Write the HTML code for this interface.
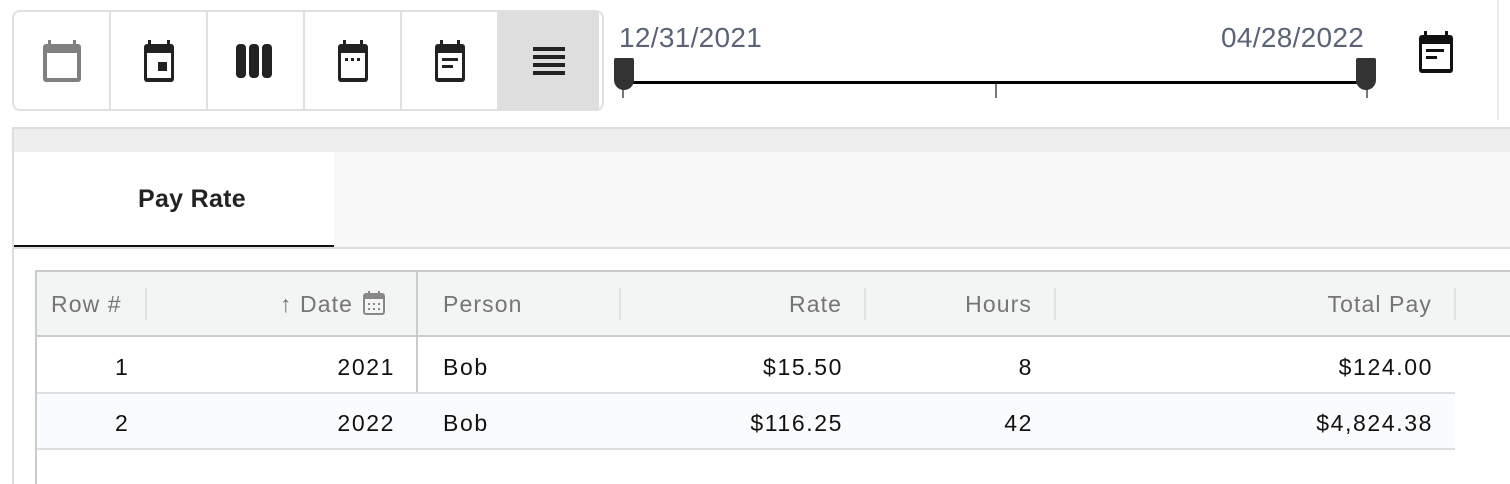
<!DOCTYPE html>
<html><head><style>
body{margin:0;width:1510px;height:484px;background:#fff;font-family:"Liberation Sans",sans-serif;position:relative;overflow:hidden}
.a{position:absolute}
.tb{left:12px;top:10px;width:588px;height:97px;border:2px solid #e0e0e0;border-radius:8px;overflow:hidden;display:flex}
.tb div{width:97px;height:97px;border-right:2px solid #e0e0e0;display:flex;align-items:center;justify-content:center;box-sizing:border-box}
.tb div:last-child{border-right:0;background:#dedede;width:100px}
.h{top:270px;height:67px;background:#f3f4f4;border-top:2px solid #c9cccf;border-bottom:2px solid #c9cccf;box-sizing:border-box}
.t{font-size:23px;position:absolute;white-space:nowrap;letter-spacing:1.4px}
.hd{color:#757575;top:291px;letter-spacing:1.1px}
.c{color:#111;letter-spacing:1.6px}
.sep{position:absolute;top:288px;width:2px;height:32px;background:#e0e2e4}
</style></head><body>
<div class="a tb">
<div><svg width="40" height="44" viewBox="0 0 40 44"><rect x="1" y="5" width="38" height="38" rx="3" fill="#808080"/><rect x="5" y="14" width="30" height="25" fill="#fff"/><rect x="6" y="1" width="3" height="6" fill="#808080"/><rect x="31" y="1" width="3" height="6" fill="#808080"/></svg></div>
<div><svg width="40" height="44" viewBox="0 0 40 44"><rect x="5" y="5" width="30" height="38" rx="3" fill="#222"/><rect x="8" y="14" width="24" height="25" fill="#fff"/><rect x="19" y="23" width="9" height="9" fill="#222"/><rect x="9" y="1" width="3" height="6" fill="#222"/><rect x="28" y="1" width="3" height="6" fill="#222"/></svg></div>
<div><svg width="40" height="34" viewBox="0 0 40 34"><rect x="0" y="0" width="10" height="34" rx="4" fill="#222"/><rect x="13" y="0" width="10" height="34" rx="4" fill="#222"/><rect x="26" y="0" width="10" height="34" rx="4" fill="#222"/></svg></div>
<div><svg width="40" height="44" viewBox="0 0 40 44"><rect x="5" y="5" width="30" height="38" rx="3" fill="#222"/><rect x="8" y="14" width="24" height="25" fill="#fff"/><rect x="12" y="19" width="3" height="3" fill="#222"/><rect x="18" y="19" width="3" height="3" fill="#222"/><rect x="24" y="19" width="3" height="3" fill="#222"/><rect x="10" y="1" width="3" height="6" fill="#222"/><rect x="27" y="1" width="3" height="6" fill="#222"/></svg></div>
<div><svg width="40" height="44" viewBox="0 0 40 44"><rect x="5" y="5" width="30" height="38" rx="3" fill="#222"/><rect x="8" y="14" width="24" height="25" fill="#fff"/><rect x="12" y="19" width="16" height="3" fill="#222"/><rect x="12" y="26" width="11" height="3" fill="#222"/><rect x="10" y="1" width="3" height="6" fill="#222"/><rect x="27" y="1" width="3" height="6" fill="#222"/></svg></div>
<div><svg width="32" height="28" viewBox="0 0 32 28"><rect y="0" width="32" height="4" fill="#222"/><rect y="8" width="32" height="4" fill="#222"/><rect y="16" width="32" height="4" fill="#222"/><rect y="24" width="32" height="4" fill="#222"/></svg></div>
</div>
<div class="t a" style="left:619px;top:22px;font-size:28px;letter-spacing:0.3px;color:#5a6378">12/31/2021</div>
<div class="t a" style="left:1221px;top:22px;font-size:28px;letter-spacing:0.3px;color:#5a6378">04/28/2022</div>
<div class="a" style="left:622px;top:81px;width:744px;height:3px;background:#000"></div>
<div class="a" style="left:622px;top:84px;width:2px;height:14px;background:#777"></div>
<div class="a" style="left:995px;top:84px;width:2px;height:14px;background:#777"></div>
<div class="a" style="left:1366px;top:84px;width:2px;height:14px;background:#777"></div>
<div class="a" style="left:614px;top:58px;width:20px;height:32px;background:#333;border-radius:2px 2px 10px 10px"></div>
<div class="a" style="left:1356px;top:58px;width:20px;height:32px;background:#333;border-radius:2px 2px 10px 10px"></div>
<svg class="a" style="left:1416px;top:30px" width="40" height="44" viewBox="0 0 40 44"><rect x="3" y="5" width="34" height="38" rx="3" fill="#111"/><rect x="6" y="14" width="28" height="25" fill="#fff"/><rect x="10" y="19" width="18" height="3" fill="#111"/><rect x="10" y="26" width="11" height="3" fill="#111"/><rect x="8" y="1" width="3" height="6" fill="#111"/><rect x="29" y="1" width="3" height="6" fill="#111"/></svg>
<div class="a" style="left:1497px;top:0;width:2px;height:120px;background:#eee"></div>
<div class="a" style="left:12px;top:127px;width:1498px;height:2px;background:#ddd"></div>
<div class="a" style="left:12px;top:129px;width:1498px;height:23px;background:#eee"></div>
<div class="a" style="left:12px;top:152px;width:1498px;height:96px;background:#f8f8f8"></div>
<div class="a" style="left:12px;top:127px;width:2px;height:357px;background:#ddd"></div>
<div class="a" style="left:14px;top:152px;width:320px;height:93px;background:#fff;border-bottom:3px solid #111"></div>
<div class="t a" style="left:138px;top:185px;font-size:25px;letter-spacing:0.3px;font-weight:bold;color:#222">Pay Rate</div>
<div class="a" style="left:14px;top:247px;width:1496px;height:2px;background:#ddd"></div>
<div class="a h" style="left:35px;width:1475px"></div>
<div class="a" style="left:35px;top:270px;width:2px;height:214px;background:#c9cccf"></div>
<div class="a" style="left:416px;top:270px;width:2px;height:179px;background:#c9cccf"></div>
<div class="a" style="left:37px;top:393px;width:1418px;height:56px;background:#fafbfd"></div>
<div class="a" style="left:37px;top:392px;width:1418px;height:2px;background:#dcdee0"></div>
<div class="a" style="left:37px;top:448px;width:1418px;height:2px;background:#dcdee0"></div>
<div class="sep" style="left:145px"></div><div class="sep" style="left:619px"></div><div class="sep" style="left:864px"></div><div class="sep" style="left:1054px"></div><div class="sep" style="left:1454px"></div>
<div class="t hd" style="left:51px">Row #</div>
<div class="t hd" style="right:1157px">↑ Date</div>
<svg class="a" style="left:362px;top:290px" width="24" height="26" viewBox="0 0 24 26"><rect x="2" y="4" width="20" height="20" rx="2" fill="none" stroke="#888" stroke-width="2"/><rect x="2" y="4" width="20" height="5" fill="#888"/><rect x="6" y="1" width="2" height="4" fill="#888"/><rect x="16" y="1" width="2" height="4" fill="#888"/><g fill="#888"><rect x="6" y="13" width="2" height="2"/><rect x="11" y="13" width="2" height="2"/><rect x="16" y="13" width="2" height="2"/><rect x="6" y="18" width="2" height="2"/><rect x="11" y="18" width="2" height="2"/><rect x="16" y="18" width="2" height="2"/></g></svg>
<div class="t hd" style="left:443px">Person</div>
<div class="t hd" style="right:668px">Rate</div>
<div class="t hd" style="right:478px">Hours</div>
<div class="t hd" style="right:78px">Total Pay</div>
<div class="t c" style="left:115px;top:354px">1</div>
<div class="t c" style="right:1115px;top:354px">2021</div>
<div class="t c" style="left:443px;top:354px">Bob</div>
<div class="t c" style="right:667px;top:354px">$15.50</div>
<div class="t c" style="right:477px;top:354px">8</div>
<div class="t c" style="right:77px;top:354px">$124.00</div>
<div class="t c" style="left:115px;top:410px">2</div>
<div class="t c" style="right:1115px;top:410px">2022</div>
<div class="t c" style="left:443px;top:410px">Bob</div>
<div class="t c" style="right:667px;top:410px">$116.25</div>
<div class="t c" style="right:477px;top:410px">42</div>
<div class="t c" style="right:77px;top:410px">$4,824.38</div>
</body></html>
